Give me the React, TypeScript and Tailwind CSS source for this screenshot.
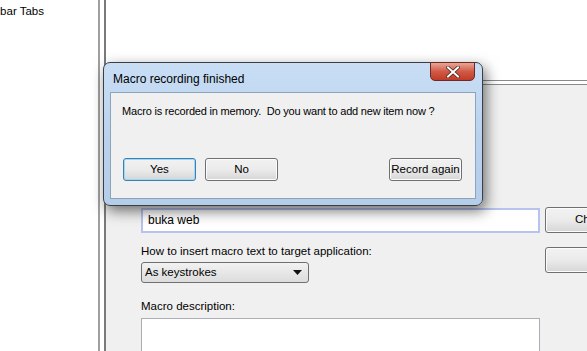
import React from "react";

const font = { fontFamily: '"Liberation Sans", Arial, sans-serif' };

function WinButton({ label, focused, className }: { label: string; focused?: boolean; className?: string }) {
  return (
    <div
      className={
        "h-[23px] rounded-[3px] border flex items-center justify-center whitespace-nowrap text-[11.5px] text-black bg-gradient-to-b from-[#f2f2f2] via-[#ebebeb] to-[#d6d6d6] " +
        (focused ? "border-[#3c7fb1] shadow-[inset_0_0_0_1px_#9ed8f7]" : "border-[#707070] shadow-[inset_0_0_0_1px_#fcfcfc]") +
        " " +
        (className || "")
      }
    >
      {label}
    </div>
  );
}

export default function App() {
  return (
    <div className="relative w-[587px] h-[351px] overflow-hidden bg-white flex text-[11.5px] text-black" style={font}>
      {/* left list panel */}
      <div className="w-[98px] h-full bg-white overflow-hidden shrink-0">
        <div className="mt-[3px] ml-[-21px] whitespace-nowrap">Toolbar Tabs</div>
      </div>
      {/* splitter */}
      <div className="w-[2px] h-full bg-[#a0a0a0] shrink-0" />
      <div className="w-[4px] h-full bg-white shrink-0" />
      <div className="w-[2px] h-full bg-[#7a7a7a] shrink-0" />

      {/* right side */}
      <div className="flex-1 flex flex-col">
        <div className="h-[80px] bg-white" />
        <div className="h-[1px] bg-[#8a8a8a]" />
        <div className="h-[3px] bg-white" />
        <div className="h-[1px] bg-[#8a8a8a]" />
        <div className="flex-1 bg-[#f0f0f0] pl-[35px] pt-[105px] flex flex-col">
          <div className="leading-[14px] mt-[-2px]">Macro name:</div>
          <div className="flex items-center mt-[5px]">
            <div className="w-[399px] h-[25px] border-2 border-[#b7c3ee] bg-white flex items-center pl-[5px] text-[12px]">
              buka web
            </div>
            <WinButton label="Change" className="ml-[5px] w-[60px] h-[26px] justify-start pl-[29px]" />
          </div>
          <div className="flex items-start mt-[11px]">
            <div className="flex flex-col w-[404px]">
              <div className="leading-[14px]">How to insert macro text to target application:</div>
              <div className="mt-[4px] w-[168px] h-[21px] rounded-[3px] border border-[#707070] bg-gradient-to-b from-[#f2f2f2] to-[#dcdcdc] flex items-center pl-[3px] pr-[6px] justify-between">
                <span>As keystrokes</span>
                <svg width="9" height="5" viewBox="0 0 9 5">
                  <path d="M0 0 H9 L4.5 5 Z" fill="#111" />
                </svg>
              </div>
            </div>
            <WinButton label="" className="mt-[3px] w-[60px] h-[26px]" />
          </div>
          <div className="mt-[16px] leading-[14px]">Macro description:</div>
          <div className="mt-[5px] w-[399px] flex-1 border border-[#abadb3] border-b-0 bg-white" />
        </div>
      </div>

      {/* modal dialog */}
      <div className="absolute left-[103px] top-[62px] w-[380px] h-[144px] rounded-[7px] border border-[#3a3f47] bg-gradient-to-b from-[#c9def5] via-[#b9d3ee] to-[#b4cde8] shadow-[3px_5px_14px_rgba(0,0,0,0.55)] flex flex-col px-[6px] pb-[6px]">
        <div className="h-[29px] flex items-start justify-between shrink-0">
          <div className="mt-[7px] ml-[3px] text-[12px] text-black">Macro recording finished</div>
          <div className="w-[45px] h-[19px] mt-[-1px] mr-[1px] rounded-b-[5px] border border-[#6b2a24] bg-gradient-to-b from-[#e8a597] via-[#cf5a45] to-[#c23a24] flex items-center justify-center">
            <svg width="14" height="12" viewBox="0 0 14 12">
              <path d="M2 1.5 L12 10.5 M12 1.5 L2 10.5" stroke="#4a2420" strokeWidth="3.6" strokeLinecap="square" />
              <path d="M2 1.5 L12 10.5 M12 1.5 L2 10.5" stroke="#ffffff" strokeWidth="2" strokeLinecap="square" />
            </svg>
          </div>
        </div>
        <div className="flex-1 bg-[#f0f0f0] border border-[#8da2bb] flex flex-col">
          <div className="mt-[10px] ml-[11px] whitespace-pre text-[11px] tracking-[-0.2px]">Macro is recorded in memory.  Do you want to add new item now ?</div>
          <div className="mt-auto mb-[17px] flex px-[12px]">
            <WinButton label="Yes" focused className="w-[73px]" />
            <WinButton label="No" className="w-[73px] ml-[9px]" />
            <WinButton label="Record again" className="w-[73px] ml-auto mr-[1px]" />
          </div>
        </div>
      </div>
    </div>
  );
}
